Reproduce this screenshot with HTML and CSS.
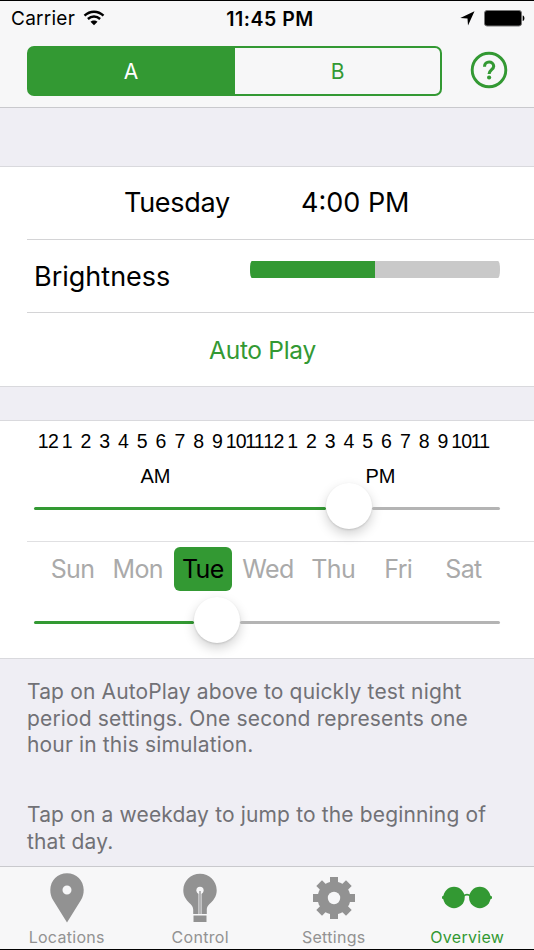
FILE: index.html
```
<!DOCTYPE html>
<html lang="en">
<head>
  <meta charset="utf-8">
  <title>Overview</title>
  <link rel="stylesheet" href="styles.css">
</head>
<body>
  <div class="app">
    <header class="header">
      <div class="status-bar">
        <div class="carrier">
          <span class="carrier-name">Carrier</span>
          <svg class="wifi" width="22" height="16" viewBox="0 0 22 16">
            <path d="M1.500 5.600C7 .4 15 .4 20.500 5.600M4.900 9C8.500 5.700 13.500 5.700 17.100 9" fill="none" stroke="#000" stroke-width="2.400"/>
            <path d="M11 15.200L7.500 11.700C9.300 10.100 12.700 10.100 14.500 11.700Z"/>
          </svg>
        </div>
        <div class="clock">11:45 PM</div>
        <div class="indicators">
          <svg width="15" height="15" viewBox="0 0 15 15"><path d="M14.500 .3L8 14.500L7.500 7.500L.3 7Z"/></svg>
          <svg width="41" height="17" viewBox="0 0 41 17">
            <rect x=".5" y=".5" width="37" height="15.500" rx="2.500" fill="#000" stroke="#777"/>
            <path d="M38.700 5.500C41 6 41 10.500 38.700 11Z"/>
          </svg>
        </div>
      </div>
      <div class="toolbar">
        <div class="segments">
          <button class="segment active">A</button>
          <button class="segment">B</button>
        </div>
        <button class="help">
          <svg width="38" height="38" viewBox="0 0 38 38" fill="none" stroke="#339933">
            <circle cx="19" cy="19" r="16.800" stroke-width="2.900"/>
            <path d="M14.500 15.700C14.500 9.500 23.700 9.700 23.700 15.200C23.700 18.600 19.100 18.700 19.100 23" stroke-width="3.100"/>
            <circle cx="19.100" cy="26.500" r="2.100" fill="#339933" stroke="none"/>
          </svg>
        </button>
      </div>
    </header>

    <main class="content">
      <section class="group">
        <div class="row now">
          <span class="now-day">Tuesday</span>
          <span class="now-time">4:00 PM</span>
        </div>
        <div class="row brightness">
          <span class="brightness-label">Brightness</span>
          <div class="meter"><div class="meter-fill"></div></div>
        </div>
        <div class="row autoplay"><span>Auto Play</span></div>
      </section>

      <section class="group sliders">
        <div class="time-row">
          <div class="hours">
            <span>12</span><span>1</span><span>2</span><span>3</span><span>4</span><span>5</span>
            <span>6</span><span>7</span><span>8</span><span>9</span><span>10</span><span>11</span>
            <span>12</span><span>1</span><span>2</span><span>3</span><span>4</span><span>5</span>
            <span>6</span><span>7</span><span>8</span><span>9</span><span>10</span><span>11</span>
          </div>
          <div class="periods"><span>AM</span><span>PM</span></div>
          <div class="slider time-slider">
            <div class="track-on"></div><div class="thumb"></div><div class="track-off"></div>
          </div>
        </div>
        <div class="day-row">
          <div class="days">
            <span>Sun</span><span>Mon</span><span class="selected">Tue</span><span>Wed</span><span>Thu</span><span>Fri</span><span>Sat</span>
          </div>
          <div class="slider day-slider">
            <div class="track-on"></div><div class="thumb"></div><div class="track-off"></div>
          </div>
        </div>
      </section>

      <div class="notes">
        <p class="note">Tap on AutoPlay above to quickly test night<br>period settings. One second represents one<br>hour in this simulation.</p>
        <p class="note">Tap on a weekday to jump to the beginning of<br>that day.</p>
      </div>
    </main>

    <nav class="tabs">
      <div class="tab">
        <svg width="52" height="52" viewBox="0 0 52 52" fill="#929292">
          <path fill-rule="evenodd" d="M26 50.500L12 28C10.200 25 9.300 22 9.300 17.800C9.300 8.500 16.700 1.200 26 1.200S42.700 8.500 42.700 17.800C42.700 22 41.800 25 40 28ZM26 13.500a4.500 4.500 0 1 0 0 9a4.500 4.500 0 1 0 0-9Z"/>
        </svg>
        <span>Locations</span>
      </div>
      <div class="tab">
        <svg width="52" height="52" viewBox="0 0 52 52" fill="#929292">
          <path d="M19.200 42V37.500C19.200 33 14.500 31 12 27C9.800 24 9.300 21 9.300 18.300C9.300 9 16.700 1.800 26 1.800S42.700 9 42.700 18.300C42.700 21 42.200 24 40 27C37.500 31 32.800 33 32.800 37.500V42Z"/>
          <path d="M19.500 43.500H32.500V50H19.500Z"/>
          <path d="M26 19V42" stroke="#f7f7f8" stroke-width="3"/>
          <circle cx="26" cy="18.300" r="3.600" fill="#f7f7f8"/>
          <path d="M26 19V42" stroke="#929292" stroke-width="1.300"/>
        </svg>
        <span>Control</span>
      </div>
      <div class="tab">
        <svg width="52" height="52" viewBox="0 0 52 52" fill="#929292">
          <g transform="translate(26 26)">
            <rect x="-4" y="-21" width="8" height="42"/>
            <rect x="-4" y="-21" width="8" height="42" transform="rotate(45)"/>
            <rect x="-4" y="-21" width="8" height="42" transform="rotate(90)"/>
            <rect x="-4" y="-21" width="8" height="42" transform="rotate(135)"/>
            <circle r="16.500"/>
            <circle r="6.200" fill="#f7f7f8"/>
          </g>
        </svg>
        <span>Settings</span>
      </div>
      <div class="tab current">
        <svg width="52" height="52" viewBox="0 0 52 52" fill="#339933">
          <circle cx="13" cy="25.500" r="10.700"/>
          <circle cx="38.800" cy="25.500" r="10.700"/>
          <path d="M22.500 24.200C24.500 22 27.500 22 29.500 24.200" fill="none" stroke="#339933" stroke-width="1.700"/>
          <path d="M1 24.500L4 23V28L1 26.500ZM51 24.500L48 23V28L51 26.500Z"/>
        </svg>
        <span>Overview</span>
      </div>
    </nav>
  </div>
</body>
</html>
```
FILE: styles.css
```
* {
  box-sizing: border-box;
}
body {
  margin: 0;
  font-family: Inter, "Liberation Sans", sans-serif;
  color: #000;
  background: #efeef4;
}
button {
  margin: 0;
  padding: 0;
  border: 0;
  background: none;
  font: inherit;
}
svg {
  display: block;
  flex: none;
}
.app {
  height: 950px;
  display: flex;
  flex-direction: column;
  overflow: hidden;
  border-top: 1px solid #000;
  border-bottom: 1px solid #000;
}

/* header */
.header {
  flex: none;
  height: 107px;
  background: #f7f7f8;
  border-bottom: 1px solid #c9c9cd;
}
.status-bar {
  height: 45px;
  padding: 0 9px 10px 11px;
  display: grid;
  grid-template-columns: 1fr auto 1fr;
  align-items: center;
  font-size: 19px;
  white-space: nowrap;
}
.carrier {
  display: flex;
  align-items: center;
  gap: 8px;
}
.carrier-name {
  letter-spacing: 0.25px;
}
.wifi {
  margin-top: -1px;
}
.clock {
  margin-left: 4px;
  font-size: 19.5px;
  font-weight: 600;
  letter-spacing: 0.5px;
}
.indicators {
  display: flex;
  justify-content: flex-end;
  align-items: center;
  gap: 9px;
}
.toolbar {
  display: flex;
  align-items: center;
  padding: 0 26px 0 27px;
  justify-content: space-between;
}
.segments {
  width: 415px;
  height: 50px;
  display: grid;
  grid-template-columns: 208px 207px;
}
.segment {
  border: 2px solid #339933;
  border-left: 0;
  border-radius: 0 7px 7px 0;
  color: #339933;
  font-size: 21px;
}
.segment.active {
  border: 0;
  border-radius: 7px 0 0 7px;
  background: #339933;
  color: #fff;
}
.help {
  margin-top: -3px;
}

/* first group */
.content {
  flex: 1;
  min-height: 0;
  padding-top: 58px;
  overflow: hidden;
}
.group {
  background: #fff;
  border-top: 1px solid #d9d9dd;
  border-bottom: 1px solid #d9d9dd;
}
.row {
  height: 73px;
  margin-left: 27px;
  border-bottom: 1px solid #d4d4d6;
  display: flex;
  align-items: center;
  font-size: 27px;
}
.now {
  padding-bottom: 1px;
}
.now-day {
  width: 177px;
  margin-left: 97px;
  letter-spacing: -0.3px;
}
.now-time {
  letter-spacing: 0;
}
.brightness {
  padding: 0 34px 0 7px;
  justify-content: space-between;
}
.meter {
  width: 250px;
  height: 17px;
  margin-bottom: 14px;
  border-radius: 2px / 8px;
  background: #c9c9c9;
  overflow: hidden;
}
.meter-fill {
  width: 50%;
  height: 100%;
  background: #339933;
}
.autoplay {
  border-bottom: 0;
  justify-content: center;
  padding-right: 36px;
  color: #339933;
  font-size: 24.5px;
  letter-spacing: -0.3px;
}

/* sliders */
.sliders {
  margin-top: 33px;
}
.time-row {
  height: 120px;
  padding-top: 8px;
}
.hours {
  width: 451px;
  height: 24px;
  margin-left: 38.5px;
  display: grid;
  grid-template-columns: repeat(24, 1fr);
  font: 19.5px/24px "Liberation Sans", sans-serif;
}
.hours span {
  display: flex;
  justify-content: center;
  min-width: 0;
  letter-spacing: -0.8px;
}
.periods {
  display: grid;
  grid-template-columns: 225px 225px;
  margin: 11px 0 0 43px;
  font: 20px/24px "Liberation Sans", sans-serif;
  text-align: center;
}
.slider {
  height: 46px;
  margin: 0 34px;
  display: flex;
  align-items: center;
}
.track-on,
.track-off {
  height: 3px;
  border-radius: 2px;
}
.track-on {
  background: #339933;
}
.track-off {
  flex: 1;
  background: #b4b4b4;
}
.thumb {
  flex: none;
  width: 46px;
  height: 46px;
  margin-bottom: 4px;
  border-radius: 50%;
  background: #fff;
  box-shadow: 0 5px 12px rgba(0, 0, 0, 0.18), 0 1px 2px rgba(0, 0, 0, 0.12);
}
.time-slider {
  margin-top: -3px;
  position: relative;
}
.time-slider .track-on {
  width: 292px;
}
.day-row {
  height: 117px;
  margin-left: 27px;
  padding-top: 5px;
  border-top: 1px solid #e0e0e2;
}
.days {
  height: 44px;
  width: 456px;
  margin-left: 13px;
  display: grid;
  grid-template-columns: repeat(7, 1fr);
  justify-items: center;
  font-size: 25px;
  line-height: 44px;
  color: #aaa;
  letter-spacing: -0.6px;
}
.selected {
  width: 58px;
  text-align: center;
  border-radius: 6px;
  background: #339933;
  color: #000;
}
.day-slider {
  margin: 8px 34px 0 7px;
}
.day-slider .track-on {
  width: 160px;
}

/* notes */
.notes {
  padding: 20px 27px 0;
  color: #717176;
  font-size: 21px;
  line-height: 26.7px;
  letter-spacing: 0.15px;
  white-space: nowrap;
}
.note {
  margin: 0 0 43px;
}

/* tab bar */
.tabs {
  flex: none;
  height: 83px;
  display: grid;
  grid-template-columns: repeat(4, 133.5px);
  background: #f7f7f8;
  border-top: 1px solid #c9c9cd;
}
.tab {
  padding-top: 5px;
  display: flex;
  flex-direction: column;
  align-items: center;
  color: #929292;
  font-size: 16px;
  line-height: 20px;
  letter-spacing: 0.3px;
}
.tab span {
  margin-top: 3px;
}
.tab.current {
  color: #339933;
}
```
